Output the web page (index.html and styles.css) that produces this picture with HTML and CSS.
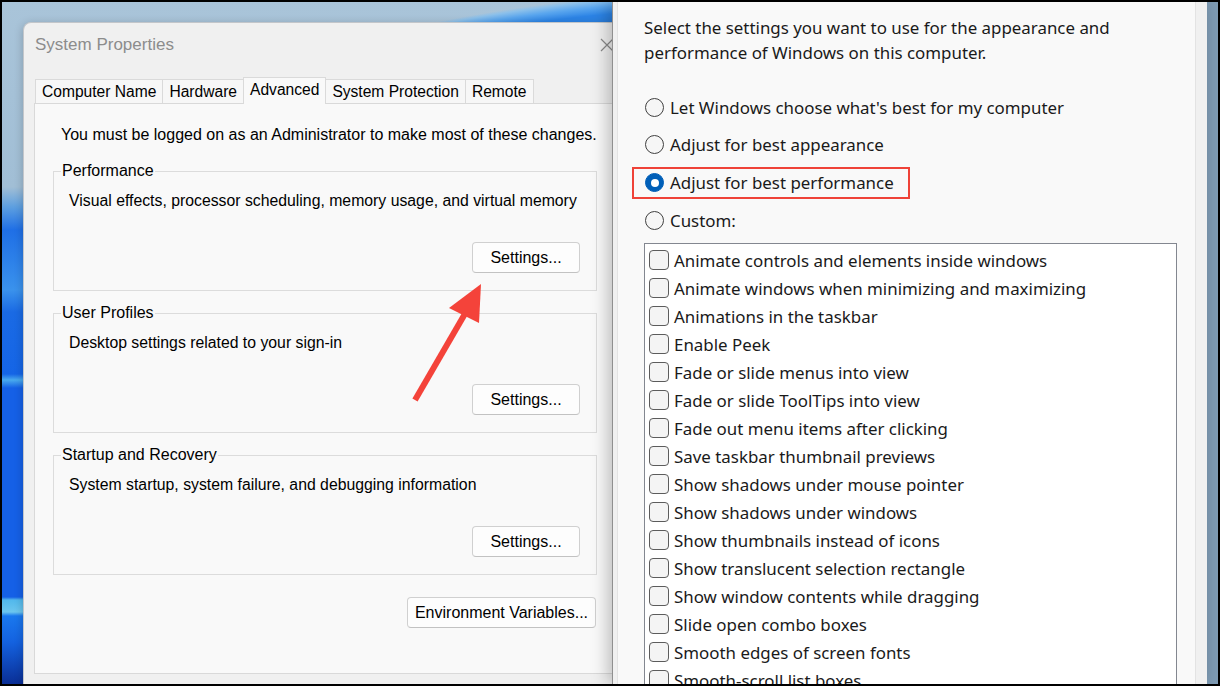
FILE: index.html
```html
<!DOCTYPE html>
<html lang="en">
<head>
  <meta charset="UTF-8">
  <meta name="viewport" content="width=device-width, initial-scale=1.0">
  <title>System Properties - Performance Options</title>
  <link rel="stylesheet" href="styles.css">
</head>
<body>
  <div class="screen">

    <!-- System Properties (inactive, behind) -->
    <div class="window sysprops">
      <div class="titlebar">
        <span class="title">System Properties</span>
        <svg class="close" width="14" height="14" viewBox="0 0 14 14">
          <path d="M1 1 L13 13 M13 1 L1 13" stroke="#8a8a8a" stroke-width="1.2" fill="none"/>
        </svg>
      </div>

      <div class="tabs">
        <div class="tab">Computer Name</div>
        <div class="tab">Hardware</div>
        <div class="tab active">Advanced</div>
        <div class="tab">System Protection</div>
        <div class="tab">Remote</div>
      </div>

      <div class="tab-panel">
        <p class="note">You must be logged on as an Administrator to make most of these changes.</p>

        <fieldset class="group">
          <legend>Performance</legend>
          <p class="group-desc">Visual effects, processor scheduling, memory usage, and virtual memory</p>
          <button class="btn settings">Settings...</button>
        </fieldset>

        <fieldset class="group">
          <legend>User Profiles</legend>
          <p class="group-desc">Desktop settings related to your sign-in</p>
          <button class="btn settings">Settings...</button>
        </fieldset>

        <fieldset class="group">
          <legend>Startup and Recovery</legend>
          <p class="group-desc">System startup, system failure, and debugging information</p>
          <button class="btn settings">Settings...</button>
        </fieldset>

        <button class="btn env">Environment Variables...</button>
      </div>
    </div>

    <!-- Performance Options, Visual Effects tab -->
    <div class="window perf">
      <div class="perf-panel">
        <p class="intro">Select the settings you want to use for the appearance and<br>performance of Windows on this computer.</p>

        <div class="radios">
          <div class="radio-row"><span class="radio"></span>Let Windows choose what's best for my computer</div>
          <div class="radio-row"><span class="radio"></span>Adjust for best appearance</div>
          <div class="radio-row highlight"><span class="radio checked"></span>Adjust for best performance</div>
          <div class="radio-row"><span class="radio"></span>Custom:</div>
        </div>

        <div class="effects-list">
          <div class="check-row"><span class="check"></span>Animate controls and elements inside windows</div>
          <div class="check-row"><span class="check"></span>Animate windows when minimizing and maximizing</div>
          <div class="check-row"><span class="check"></span>Animations in the taskbar</div>
          <div class="check-row"><span class="check"></span>Enable Peek</div>
          <div class="check-row"><span class="check"></span>Fade or slide menus into view</div>
          <div class="check-row"><span class="check"></span>Fade or slide ToolTips into view</div>
          <div class="check-row"><span class="check"></span>Fade out menu items after clicking</div>
          <div class="check-row"><span class="check"></span>Save taskbar thumbnail previews</div>
          <div class="check-row"><span class="check"></span>Show shadows under mouse pointer</div>
          <div class="check-row"><span class="check"></span>Show shadows under windows</div>
          <div class="check-row"><span class="check"></span>Show thumbnails instead of icons</div>
          <div class="check-row"><span class="check"></span>Show translucent selection rectangle</div>
          <div class="check-row"><span class="check"></span>Show window contents while dragging</div>
          <div class="check-row"><span class="check"></span>Slide open combo boxes</div>
          <div class="check-row"><span class="check"></span>Smooth edges of screen fonts</div>
          <div class="check-row"><span class="check"></span>Smooth-scroll list boxes</div>
        </div>
      </div>
    </div>

    <!-- annotation arrow -->
    <svg class="arrow" width="100" height="150" viewBox="0 0 100 150">
      <line x1="15" y1="130" x2="66" y2="42" stroke="#f4433a" stroke-width="6"/>
      <polygon points="81,14 49,38 79,53" fill="#f4433a"/>
    </svg>
  </div>
</body>
</html>
```

FILE: styles.css
```css
body {
  margin: 0;
  background: #000;
}

.screen {
  position: relative;
  width: 1220px;
  height: 686px;
  box-sizing: border-box;
  border: 2px solid #000;
  overflow: hidden;
  background:
    radial-gradient(circle at 760px 1663px, #2a80e4 0, #2c84e6 1658px, #5aa6ee 1666px, #8cc0ea 1672px, transparent 1675px) 0 0 / 620px 30px no-repeat,
    linear-gradient(90deg, transparent 1205px, #7e9bb4 1205px),
    linear-gradient(180deg, #a9c4d9 0, #a1bed5 185px, #5d9fe0 205px, #1f6fe6 228px, #3a92ec 288px, #1a6ae4 310px, #1565e6 372px, #49aaee 378px, #1560e6 386px, #1560e6 595px, #52b8ec 598px, #6cc6ee 610px, #1a78ee 614px, #1462e0 640px, #0a2c92 684px);
  font-family: "Liberation Sans", Arial, sans-serif;
}

/* ---------- windows ---------- */

.window {
  position: absolute;
  box-sizing: border-box;
}

.sysprops {
  left: 21px;
  top: 20px;
  width: 605px;
  height: 664px;
  background: #f0f0f0;
  border: 1px solid #c3c6ca;
  border-bottom: none;
  border-radius: 8px 8px 0 0;
  box-shadow: 0 2px 10px rgba(0, 0, 0, 0.22);
  padding: 0 10px 12px 10px;
  display: flex;
  flex-direction: column;
}

.titlebar {
  height: 43px;
  display: flex;
  align-items: center;
  justify-content: space-between;
  padding-left: 1px;
}

.title {
  font-size: 17px;
  color: #8c8c8c;
}

.close {
  margin-right: 3px;
}

.tabs {
  display: flex;
  align-items: flex-start;
  margin-top: 13px;
  height: 24px;
  padding-left: 1px;
}

.tab {
  height: 24px;
  box-sizing: border-box;
  padding: 0 6px;
  line-height: 23px;
  font-size: 15.6px;
  color: #000;
  background: #f7f7f7;
  border: 1px solid #dadada;
  border-bottom: none;
  margin-left: -1px;
}

.tab:first-child {
  margin-left: 0;
}

.tab.active {
  position: relative;
  z-index: 1;
  height: 27px;
  margin-top: -2px;
  line-height: 23px;
  background: #f9f9f9;
}

.tab-panel {
  flex: 1;
  background: #f9f9f9;
  border: 1px solid #d9d9d9;
  padding: 21px 19px 0 18px;
  display: flex;
  flex-direction: column;
}

.note {
  margin: 0 0 0 8px;
  font-size: 16px;
  line-height: 20px;
  color: #000;
  white-space: nowrap;
}

.group {
  margin: 16px 0 0 0;
  padding: 0;
  border: 1px solid #dcdcdc;
  min-width: 0;
}

.group + .group {
  margin-top: 12px;
}

.group legend {
  margin-left: 7px;
  padding: 0 1px;
  font-size: 16px;
  line-height: 20px;
  color: #000;
}

.group-desc {
  margin: 10px 0 0 15px;
  font-size: 15.8px;
  line-height: 20px;
  color: #000;
  white-space: nowrap;
}

.btn {
  display: block;
  height: 31px;
  box-sizing: border-box;
  background: #fdfdfd;
  border: 1px solid #d0d0d0;
  border-bottom-color: #c2c2c2;
  border-radius: 4px;
  font-family: "Liberation Sans", Arial, sans-serif;
  font-size: 16px;
  color: #000;
  padding: 0;
}

.btn.settings {
  width: 108px;
  margin: 31px 16px 17px auto;
}

.btn.env {
  width: 189px;
  align-self: flex-end;
  margin: 22px 1px 0 0;
}

/* ---------- performance options ---------- */

.perf {
  left: 610px;
  top: 0;
  width: 595px;
  height: 682px;
  background: #f0f0f0;
  border-left: 1px solid #8f8f8f;
  box-shadow: -4px 0 16px rgba(0, 0, 0, 0.25);
  padding: 0 11px 0 4px;
  z-index: 2;
}

.perf-panel {
  height: 100%;
  box-sizing: border-box;
  background: #f9f9f9;
  border-left: 1px solid #e3e3e3;
  border-right: 1px solid #e3e3e3;
  padding: 13px 18px 0 26px;
  font-family: "Noto Sans", "Open Sans", sans-serif;
  font-size: 16.9px;
  color: #1a1a1a;
}

.intro {
  margin: 0;
  line-height: 25px;
}

.radios {
  margin-top: 23.5px;
}

.radio-row {
  position: relative;
  height: 37.67px;
  display: flex;
  align-items: center;
}

.radio {
  width: 19px;
  height: 19px;
  box-sizing: border-box;
  margin: 0 6px 0 1px;
  border: 1px solid #404040;
  border-radius: 50%;
  background: #f6f6f6;
  display: flex;
  align-items: center;
  justify-content: center;
  flex: none;
}

.radio.checked {
  background: #005fb8;
  border-color: #005fb8;
}

.radio.checked::after {
  content: "";
  width: 8px;
  height: 8px;
  border-radius: 50%;
  background: #fff;
}

/* red annotation box round the chosen option */
.radio-row.highlight::after {
  content: "";
  position: absolute;
  left: -12px;
  top: 3px;
  width: 278px;
  height: 32px;
  box-sizing: border-box;
  border: 2px solid #ef4238;
}

.effects-list {
  margin-top: 4px;
  width: 533px;
  height: 460px;
  box-sizing: border-box;
  background: #fff;
  border: 1px solid #838790;
  padding: 2px 0 0 4px;
  overflow: hidden;
}

.check-row {
  height: 28px;
  display: flex;
  align-items: center;
  white-space: nowrap;
}

.check {
  width: 20px;
  height: 20px;
  box-sizing: border-box;
  margin-right: 5px;
  border: 1px solid #5c5c5c;
  border-radius: 4px;
  background: #f4f4f4;
  flex: none;
}

/* ---------- annotation ---------- */

.arrow {
  position: absolute;
  left: 398px;
  top: 268px;
  z-index: 3;
}
```
